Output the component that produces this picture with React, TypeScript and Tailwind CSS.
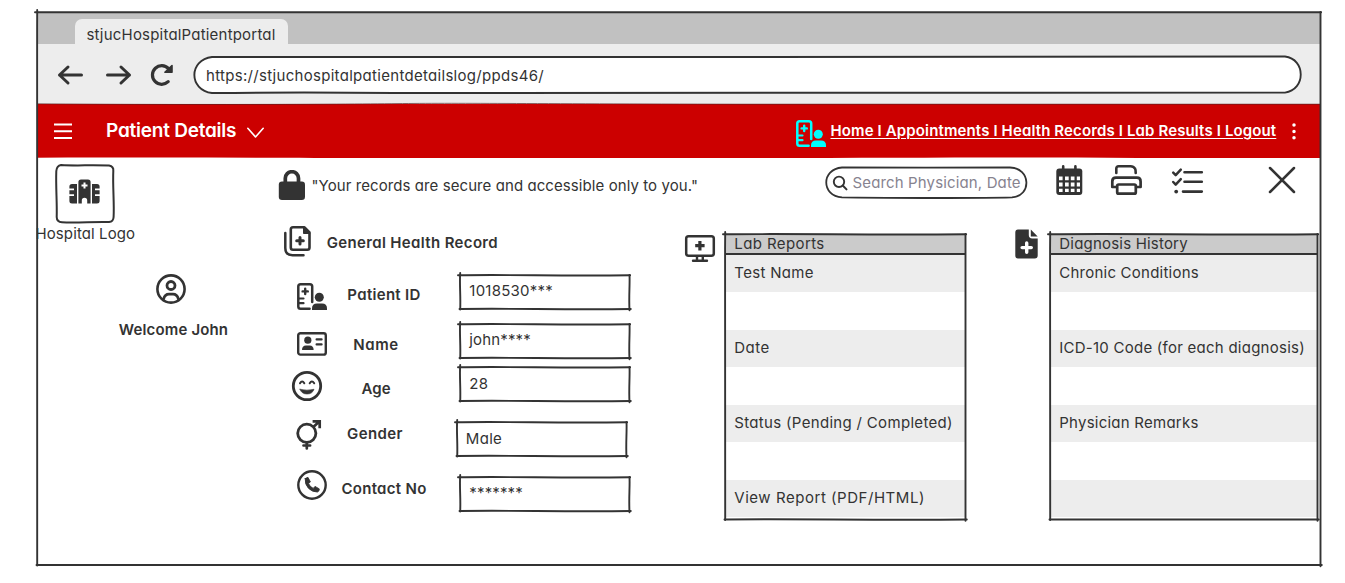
import React from "react";

type KidProps = { children?: React.ReactNode; className?: string };

function Ico({ w, h, children, className = "" }: KidProps & { w: number; h: number }) {
  return (
    <svg width={w} height={h} viewBox={`0 0 ${w} ${h}`} fill="none" stroke="currentColor" strokeWidth="2.8" strokeLinecap="round" strokeLinejoin="round" className={`shrink-0 overflow-visible ${className}`}>
      {children}
    </svg>
  );
}

/* Hand-drawn rectangle outline with overshooting corners */
function Sketch({ w, h, over = 2 }: { w: number; h: number; over?: number }) {
  return (
    <svg width={w} height={h} fill="none" stroke="#333" strokeWidth="1.9" strokeLinecap="round" className="pointer-events-none absolute top-0 left-0 overflow-visible">
      <path d={`M${-over} .3 C${w * 0.3} -.6 ${w * 0.6} 1.2 ${w + over / 3} .2`} />
      <path d={`M.2 ${-over} C-.6 ${h * 0.3} .8 ${h * 0.6} .2 ${h + 0.5}`} />
      <path d={`M${w} 0 C${w + 0.5} ${h * 0.3} ${w - 0.8} ${h * 0.6} ${w} ${h + 1.3}`} />
      <path d={`M-.5 ${h} C${w * 0.3} ${h - 0.8} ${w * 0.6} ${h + 0.8} ${w + 1.3} ${h}`} />
    </svg>
  );
}

function PatientCard({ className = "" }: { className?: string }) {
  return (
    <Ico w={30} h={27} className={className}>
      <path d="M15.2 12.5V3.6Q15.2 1.3 12.9 1.3H3.6Q1.3 1.3 1.3 3.6V23.4Q1.3 25.7 3.6 25.7H12.6M15.2 12V19" strokeWidth="2.5" />
      <path d="M8.2 5.8V11M5.6 8.4H10.8" strokeWidth="2.4" />
      <path d="M2 15.5H6.5M2 20.2H6.5" strokeWidth="2.2" />
      <circle cx="22.3" cy="14.2" r="4.5" fill="currentColor" stroke="none" />
      <path d="M15 27V25.3Q15 20.4 20 20.4H25Q30 20.4 30 25.3V27Z" fill="currentColor" stroke="none" />
    </Ico>
  );
}

function Field({ children, label, value, row, labelCls, valueCls, boxCls = "ml-[19px]" }: KidProps & { label: string; value: string; row: string; labelCls: string; valueCls: string; boxCls?: string }) {
  return (
    <div className={`flex items-start ${row}`}>
      <div className="w-[50px] shrink-0">{children}</div>
      <div className={`w-[114px] shrink-0 text-center leading-5 font-semibold whitespace-nowrap ${labelCls}`}>{label}</div>
      <div className={`relative h-[34px] w-[169.5px] shrink-0 pl-[9.3px] ${boxCls}`}>
        <Sketch w={169.5} h={34} />
        <span className={`block leading-5 whitespace-nowrap ${valueCls}`}>{value}</span>
      </div>
    </div>
  );
}

type Row = [string, string];

function Table({ title, titleCls, rows, w, className }: { title: string; titleCls: string; rows: Row[]; w: number; className: string }) {
  return (
    <section className={`relative h-[285.5px] shrink-0 leading-5 ${className}`}>
      <div className={`h-[21px] border-b-2 border-[#333] bg-[#cbcbcb] pl-[9px] ${titleCls}`}>{title}</div>
      {rows.map(([text, cls], i) => (
        <div key={i} className="h-[75px] last:h-[38px]">
          <div className={`h-[37px] bg-[#ededed] pt-[8px] pl-[9px] whitespace-nowrap ${cls}`}>{text}</div>
        </div>
      ))}
      <Sketch w={w} h={285.5} />
    </section>
  );
}

export default function App() {
  return (
    <main className="h-[583px] w-[1345px] overflow-hidden bg-white pt-[12px] pl-[37px] font-['Inter',sans-serif] text-[15px] text-[#333] [font-feature-settings:'cv11']">
      <div className="relative flex h-[553px] w-[1283.5px] flex-col">
        <div className="flex h-[32px] items-end bg-[#c1c1c1] pl-[38px]">
          <div className="h-[25px] w-[213px] rounded-t-[7px] bg-[#ededed] pt-[5.5px] pl-[11.5px] leading-5 tracking-[0.2px] whitespace-nowrap">stjucHospitalPatientportal</div>
        </div>

        <div className="flex h-[60px] items-start bg-[#ededed]">
          <Ico w={25} h={20} className="mt-[21px] ml-[21px]">
            <path d="M1.5 10H23.5M10 2L1.5 10L10 18" strokeWidth="3" />
          </Ico>
          <Ico w={25} h={20} className="mt-[21px] ml-[22.5px]">
            <path d="M1.5 10H23.5M15 2L23.5 10L15 18" strokeWidth="3" />
          </Ico>
          <Ico w={24} h={22} className="mt-[20px] ml-[19.5px]">
            <path d="M18.2 17.7A9.3 9.3 0 1 1 18.5 4.6" strokeWidth="3.2" />
            <path d="M22 1.5V8.3H14.9Z" fill="currentColor" strokeWidth="1.6" />
          </Ico>
          <div className="relative mt-[13px] ml-[19.5px] flex h-[36px] w-[1108px] items-center rounded-full bg-white pt-[2px] pl-[12.5px]">
            <svg width="1108" height="36" fill="none" stroke="#333" strokeWidth="1.9" className="absolute top-0 left-0 overflow-visible">
              <path d="M18 0C400 1 700 -1 1091 -.5C1112 2 1112 33 1091 35.6C800 35.4 400 36.4 200 36C120 35.2 60 35.6 18 36C-5.5 33 -5.5 3 18 0Z" />
            </svg>
            <span className="tracking-[0.3px] whitespace-nowrap">https://stjuchospitalpatientdetailslog/ppds46/</span>
          </div>
        </div>

        <header className="relative flex h-[54px] items-center bg-[#cc0000] text-white">
          <svg width="1284" height="54" className="pointer-events-none absolute top-0 left-0 overflow-visible">
            <path d="M0 -.2C150 1 300 .3 360 -.4S480 -.3 700 .2H1283" fill="none" stroke="#5a2020" strokeWidth=".7" />
            <path d="M0 54.6V53.8C200 53 350 54.6 600 54C800 54.6 950 52.6 1100 54H1283V54.6Z" fill="#fff" />
          </svg>
          <Ico w={18} h={16} className="-mt-px ml-[17px]">
            <path d="M0 1.5H18M0 8.2H18M0 15H18" strokeWidth="1.9" strokeLinecap="butt" />
          </Ico>
          <span className="ml-[34px] w-[132px] text-[19px] font-semibold tracking-[-0.23px] whitespace-nowrap">Patient Details</span>
          <Ico w={17} h={10} className="mt-[3px] ml-[8.5px]">
            <path d="M.8 .3L8.5 9L16.2 .3" strokeWidth="1.6" />
          </Ico>
          <PatientCard className="mt-[4px] ml-[532px] text-[#00ffff]" />
          <span className="ml-[5px] w-[446px] text-[15px] font-semibold tracking-[0.13px] whitespace-nowrap underline decoration-[1.3px] underline-offset-[2px]">Home I Appointments I Health Records I Lab Results I Logout</span>
          <Ico w={4} h={17} className="ml-[15.5px]">
            <path d="M2 2V2.01M2 8.4V8.41M2 14.8V14.81" strokeWidth="3.5" />
          </Ico>
        </header>

        <div className="flex h-[407px]">
          <aside className="w-[240px] shrink-0">
            <div className="relative mt-[6.5px] ml-[19px] flex h-[58px] w-[58px] pt-[14px] pl-[13px]">
              <svg width="58" height="58" fill="none" stroke="#333" strokeWidth="2" className="absolute top-0 left-0 overflow-visible">
                <path d="M5 0C20 1 35 -.2 53 .6Q57.8 1.5 57.3 6C56.6 22 58.4 38 57.6 52Q57.4 56.5 53 57.1C38 56.6 20 58.2 6 57.3Q.8 57 .7 52C1.2 38 -.3 22 .3 6Q.8 .8 5 0Z" />
              </svg>
              <svg width="31" height="25" viewBox="0 0 31 25" fill="#333">
                <path d="M3 5H8V24.5H3Q.4 24.5 .4 22V17H5V15.2H.4V11.2H5V9.4H.4V7.5Q.4 5 3 5Z" />
                <path d="M28 5H23V24.5H28Q30.6 24.5 30.6 22V17H26V15.2H30.6V11.2H26V9.4H30.6V7.5Q30.6 5 28 5Z" />
                <path d="M12 .4H19Q21.6 .4 21.6 3V24.5H18.2V21.5A2.7 2.7 0 0 0 12.8 21.5V24.5H9.4V3Q9.4 .4 12 .4Z" />
                <path d="M15.5 3.4V9.4M12.5 6.4H18.5" stroke="#fff" strokeWidth="2" />
              </svg>
            </div>
            <div className="mt-[1.5px] -ml-[1.5px] leading-5 tracking-[0.1px] whitespace-nowrap">Hospital Logo</div>
            <div className="flex w-[273px] flex-col items-center">
              <Ico w={30} h={30} className="mt-[29.7px] mr-[6px]">
                <circle cx="15" cy="15" r="13.6" strokeWidth="2.6" />
                <circle cx="15" cy="11.5" r="4" />
                <path d="M7.6 25C8.6 21.4 10.6 20.2 13 20.2H17C19.4 20.2 21.4 21.4 22.4 25" />
              </Ico>
              <div className="mt-[16.8px] leading-5 font-semibold tracking-[0.15px]">Welcome John</div>
            </div>
          </aside>

          <div className="flex flex-1 flex-col">
            <div className="flex h-[65px] shrink-0 items-start">
              <svg width="28" height="31" viewBox="0 0 28 31" className="mt-[11.5px] ml-[1px] shrink-0" fill="#333">
                <rect x=".8" y="11.6" width="26.2" height="18.4" rx="3.2" />
                <path d="M7.3 13V8.3A6.6 6.6 0 0 1 20.5 8.3V13" fill="none" stroke="#333" strokeWidth="3.7" />
              </svg>
              <span className="mt-[17.5px] ml-[5.5px] w-[388px] leading-5 tracking-[0.08px] whitespace-nowrap">"Your records are secure and accessible only to you."</span>
              <div className="relative mt-[9px] ml-[126px] flex h-[31px] w-[200px] items-center pl-[6.5px] text-[#87838f]">
                <svg width="200" height="31" fill="none" stroke="#333" strokeWidth="1.8" className="absolute top-0 left-0 overflow-visible">
                  <path d="M16 .5C60 .7 140 .4 184 .5C205 1 206 29 186 30.4C140 31.6 60 30.8 16 30.3C-5 29 -5 2 16 .5Z" />
                </svg>
                <Ico w={16} h={16} className="text-[#333]">
                  <circle cx="7" cy="6.8" r="5.2" strokeWidth="1.9" />
                  <path d="M11 10.8L14.5 14.4" strokeWidth="2" />
                </Ico>
                <span className="ml-[4.5px] pt-[1px] tracking-[0.14px] whitespace-nowrap">Search Physician, Date</span>
              </div>
              <svg width="27" height="31" viewBox="0 0 27 31" className="mt-[7px] ml-[30px] shrink-0">
                <rect x=".3" y="3.5" width="26" height="26.5" rx="3" fill="#333" />
                <path d="M7.2 1.4V6M19.4 1.4V6" stroke="#333" strokeWidth="2.6" strokeLinecap="round" />
                <path d="M3 11.4h3.6v3.8H3zM9 11.4h3.7v3.8H9zM14.8 11.4h3.7v3.8h-3.7zM20.8 11.4h3.2v3.8h-3.2zM3 17.6h3.6v3.8H3zM9 17.6h3.7v3.8H9zM14.8 17.6h3.7v3.8h-3.7zM20.8 17.6h3.2v3.8h-3.2zM3 23.8h3.6v3.2H3zM9 23.8h3.7v3.2H9zM14.8 23.8h3.7v3.2h-3.7zM20.8 23.8h3.2v3.2h-3.2z" fill="#fff" />
              </svg>
              <Ico w={31} h={30} className="mt-[7px] ml-[28.5px]">
                <path d="M5.3 8V3.6Q5.3 1.3 7.6 1.3H19.6Q22.6 1.3 24 3.6Q24.7 4.6 24.7 8" strokeWidth="2.6" />
                <path d="M5.8 22H1.3V16.4Q1.3 12.7 5 12.7H25.8Q29.6 12.7 29.6 16.4V22H25.1" strokeWidth="2.7" />
                <rect x="6.2" y="19.5" width="18.6" height="9.2" rx="1.5" strokeWidth="2.7" />
              </Ico>
              <Ico w={31} h={27} className="mt-[10px] ml-[30px]">
                <path d="M12.5 4.3H29.8M12.5 13.8H29.8M11 23.6H29.8" strokeWidth="2.6" />
                <path d="M1.2 4.6L3.7 7.2L8.8 1.7M1.2 14L3.7 16.6L8.8 11.1" strokeWidth="2.5" />
                <path d="M4.2 23.6V23.61" strokeWidth="3.8" />
              </Ico>
              <Ico w={26} h={26} className="mt-[9px] ml-[65.5px]">
                <path d="M1 1L25 25M25 1L1 25" strokeWidth="2.5" />
              </Ico>
            </div>

            <div className="flex items-start">
              <div className="w-[407.5px] shrink-0">
                <div className="flex h-[51.5px] items-start pl-[7px]">
                  <Ico w={27} h={31} className="mt-[2.5px]">
                    <path d="M9 1.3H20.5L25.5 6.5V21.5Q25.5 23.7 23.3 23.7H9Q6.8 23.7 6.8 21.5V3.5Q6.8 1.3 9 1.3Z" strokeWidth="2.6" />
                    <path d="M19.5 1.5V7.5H25.5Z" fill="currentColor" strokeWidth="1" />
                    <path d="M16 11.4V18M12.7 14.7H19.3" strokeWidth="3" />
                    <path d="M1.3 7V22Q1.3 29.2 8.5 29.2H19.5" strokeWidth="2.5" />
                  </Ico>
                  <span className="mt-[9.5px] ml-[15.7px] leading-5 font-semibold tracking-[0.35px] whitespace-nowrap">General Health Record</span>
                </div>

                <Field label="Patient ID" value="1018530***" row="h-[49px]" labelCls="mt-[10px] tracking-[0.3px]" valueCls="mt-[6px] tracking-[0.24px]">
                  <PatientCard className="mt-[8px] ml-[20px]" />
                </Field>
                <Field label="Name" value="john****" row="h-[43.5px]" labelCls="mt-[11px] -ml-[8px] mr-[8px] tracking-[0.6px]" valueCls="mt-[6.2px] tracking-[0.15px]">
                  <Ico w={30} h={24} className="mt-[8px] ml-[20px]">
                    <rect x="1.2" y="1.2" width="27.6" height="21.4" rx="2.2" strokeWidth="2.4" />
                    <circle cx="10.8" cy="8.2" r="3.6" fill="currentColor" stroke="none" />
                    <path d="M5 18Q5 13.4 9 13.4H12.6Q16.6 13.4 16.6 18Z" fill="currentColor" stroke="none" />
                    <path d="M19.6 7.4H24.6M19.6 12.4H24.6" strokeWidth="2.2" />
                  </Ico>
                </Field>
                <Field label="Age" value="28" row="h-[55px]" labelCls="mt-[11.5px] -ml-[8px] mr-[8px] tracking-[0.1px]" valueCls="mt-[6.5px] tracking-[0.4px]">
                  <Ico w={30} h={30} className="mt-[3.5px] ml-[15px]">
                    <circle cx="15" cy="15" r="13.7" />
                    <path d="M8 12.3Q10.2 8.6 12.3 12.3M17.7 12.3Q19.9 8.6 22.2 12.3" strokeWidth="2" />
                    <path d="M8 18.3Q15 20 22 18.3Q20.5 23 15 23Q9.5 23 8 18.3Z" fill="currentColor" strokeWidth=".6" />
                  </Ico>
                </Field>
                <Field label="Gender" value="Male" row="h-[55px]" labelCls="mt-[1.5px] -ml-[9px] mr-[9px] tracking-[0.4px]" valueCls="mt-[7px] tracking-[0.3px]" boxCls="ml-[15.5px]">
                  <Ico w={26} h={30} className="-mt-[2px] ml-[19px]">
                    <circle cx="10.8" cy="13.3" r="9.1" />
                    <path d="M17.3 7L23.3 1.5M16.6 1.4H23.7V8.2" strokeWidth="2.7" strokeLinecap="butt" strokeLinejoin="miter" />
                    <path d="M10.8 22.5V28.4M7.5 25.5H14.1" strokeWidth="2.7" />
                  </Ico>
                </Field>
                <Field label="Contact No" value="*******" row="h-[34px]" labelCls="mt-[1.7px] tracking-[0.3px]" valueCls="mt-[5.7px] tracking-[0.15px]">
                  <Ico w={30} h={30} className="-mt-[7px] ml-[20px]">
                    <circle cx="15" cy="15" r="13.7" strokeWidth="2.4" />
                    <path d="M8.2 8.6L10.9 7.3L13.4 11.9L11.5 13.6Q13 16.9 16.2 18.4L18 16.4L22.3 18.9Q22.3 21.6 20.4 22Q15.4 22.2 11.4 18.2Q7.6 14.2 8.2 8.6Z" fill="currentColor" strokeWidth=".9" />
                  </Ico>
                </Field>
              </div>

              <Ico w={30} h={28} className="mt-[12px]">
                <rect x="1.2" y="1.2" width="27.6" height="19.6" rx="2.4" strokeWidth="2.5" />
                <path d="M14.9 6V15.4M10.2 10.7H19.6" strokeWidth="3.2" strokeLinecap="butt" />
                <path d="M12 21.5V25.5M17.8 21.5V25.5M8 25.7H22" strokeWidth="2.4" />
              </Ico>
              <Table
                title="Lab Reports"
                titleCls="tracking-[0.4px]"
                w={240.5}
                className="mt-[10.5px] ml-[10.8px] w-[240.5px]"
                rows={[
                  ["Test Name", "tracking-[0.32px]"],
                  ["Date", "tracking-[0.5px]"],
                  ["Status (Pending / Completed)", "tracking-[0.32px]"],
                  ["View Report (PDF/HTML)", "tracking-[0.54px]"],
                ]}
              />
              <svg width="23" height="30" viewBox="0 0 23 30" className="mt-[5.5px] ml-[49.7px] shrink-0" fill="#333">
                <path d="M3 .5H13.8V6Q13.8 9.4 17.2 9.4H22.7V26.5Q22.7 29.5 19.7 29.5H3Q.3 29.5 .3 26.5V3.5Q.3 .5 3 .5Z" />
                <path d="M15.8 .5L22.7 7.4H15.8Z" />
                <path d="M11.7 14V23.2M7.1 18.6H16.3" stroke="#fff" strokeWidth="3.4" strokeLinecap="round" />
              </svg>
              <Table
                title="Diagnosis History"
                titleCls="tracking-[0.2px]"
                w={267.5}
                className="mt-[10.5px] ml-[11.8px] w-[267.5px]"
                rows={[
                  ["Chronic Conditions", "tracking-[0.23px]"],
                  ["ICD-10 Code (for each diagnosis)", "tracking-[0.25px]"],
                  ["Physician Remarks", "tracking-[0.24px]"],
                  ["", ""],
                ]}
              />
            </div>
          </div>
        </div>
        <Sketch w={1283.5} h={553} over={2} />
      </div>
    </main>
  );
}
